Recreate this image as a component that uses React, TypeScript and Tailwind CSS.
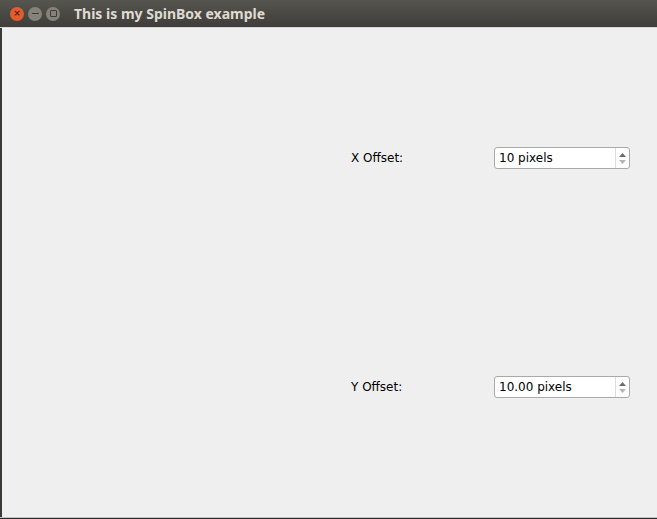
import React from "react";

function SpinBox({ value }: { value: string }) {
  return (
    <div className="flex h-[22px] w-[136px] rounded-[3px] border border-[#a9a9a9] bg-white">
      <div className="flex flex-1 items-center pl-[4px] text-[12px] text-black">{value}</div>
      <div className="flex w-[14px] flex-col items-center justify-center gap-[3px] border-l border-[#dcdcdc]">
        <svg width="7" height="4" viewBox="0 0 7 4">
          <polygon points="3.5,0 7,4 0,4" fill="#6b6b6b" />
        </svg>
        <svg width="7" height="4" viewBox="0 0 7 4">
          <polygon points="0,0 7,0 3.5,4" fill="#b5b5b5" />
        </svg>
      </div>
    </div>
  );
}

export default function App() {
  return (
    <div
      className="flex h-[519px] w-[657px] flex-col overflow-hidden bg-[#efefef]"
      style={{ fontFamily: '"DejaVu Sans", "Noto Sans", sans-serif' }}
    >
      <div className="flex h-[27px] items-center bg-gradient-to-b from-[#57554f] to-[#3e3d39] pl-[10px]">
        <div className="flex items-center gap-[4px]">
          <div className="flex h-[14px] w-[14px] items-center justify-center rounded-full bg-[#e25c2e] text-[9px] font-bold leading-none text-[#5a2010]">
            ×
          </div>
          <div className="flex h-[14px] w-[14px] items-center justify-center rounded-full bg-[#858279]">
            <div className="h-[1px] w-[7px] bg-[#3c3b37]" />
          </div>
          <div className="flex h-[14px] w-[14px] items-center justify-center rounded-full bg-[#858279]">
            <div className="h-[7px] w-[7px] rounded-[1px] border border-[#3c3b37]" />
          </div>
        </div>
        <div
          className="ml-[14px] text-[14px] font-bold text-[#dfdbd2]"
          style={{ fontFamily: '"Noto Sans", "DejaVu Sans", sans-serif' }}
        >
          This is my SpinBox example
        </div>
      </div>
      <div className="h-[1px] bg-[#d8d8d8]" />
      <div className="flex flex-1 border-l-2 border-[#3a3936]">
        <div className="flex flex-1 flex-col pt-[119px]">
          <div className="flex items-center">
            <div className="w-[492px] pl-[349px] text-[12px] text-black">X Offset:</div>
            <SpinBox value="10 pixels" />
          </div>
          <div className="mt-[207px] flex items-center">
            <div className="w-[492px] pl-[349px] text-[12px] text-black">Y Offset:</div>
            <SpinBox value="10.00 pixels" />
          </div>
        </div>
      </div>
      <div className="h-[1px] bg-[#c4c4c4]" />
      <div className="h-[1px] bg-[#2b2b2b]" />
    </div>
  );
}
